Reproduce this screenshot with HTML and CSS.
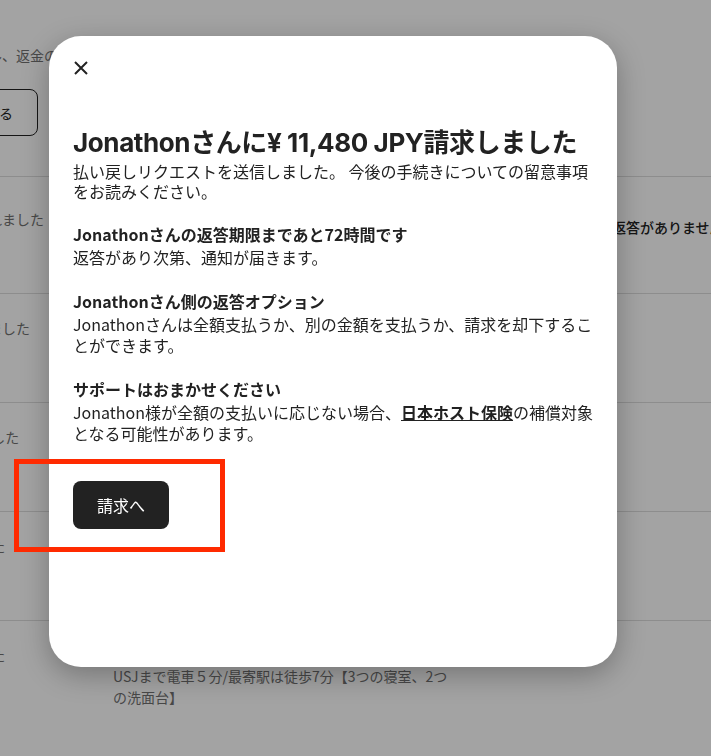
FILE: index.html
```html
<!DOCTYPE html>
<html lang="ja">

<head>
  <meta charset="UTF-8">
  <meta name="viewport" content="width=device-width, initial-scale=1.0">
  <title>請求</title>
  <link rel="stylesheet" href="styles.css">
</head>

<body>

  <!-- page behind the dialog -->
  <div class="page">
    <div class="intro">
      <p class="intro-text">予約キャンセル、返金のリクエストを管理できます。</p>
      <button class="outline-btn">ヘルプを見る</button>
    </div>

    <div class="row first">
      <div class="status">返金が承認されました</div>
      <div class="listing"></div>
      <div class="reply">返答がありません</div>
    </div>
    <div class="row">
      <div class="status">返金を送金しました</div>
      <div class="listing"></div>
    </div>
    <div class="row">
      <div class="status">支払い されました</div>
      <div class="listing"></div>
    </div>
    <div class="row">
      <div class="status">請求を撤回 した</div>
      <div class="listing"></div>
    </div>
    <div class="row">
      <div class="status">請求を撤回 した</div>
      <div class="listing">
        <div>大阪ベイエリアの一軒家</div>
        <div>USJまで電車５分/最寄駅は徒歩7分【3つの寝室、2つの洗面台】</div>
      </div>
    </div>
  </div>

  <div class="overlay"></div>

  <div class="modal">
    <button class="close-btn" aria-label="閉じる">
      <svg viewBox="0 0 16 16" width="16" height="16">
        <path d="M2 2 14 14M14 2 2 14" stroke="#222" stroke-width="2" fill="none" />
      </svg>
    </button>

    <h1 class="modal-title">Jonathonさんに¥ 11,480 JPY請求しました</h1>
    <p class="modal-sub">払い戻しリクエストを送信しました。 今後の手続きについての留意事項をお読みください。</p>

    <div class="section">
      <h2>Jonathonさんの返答期限まであと72時間です</h2>
      <p>返答があり次第、通知が届きます。</p>
    </div>

    <div class="section">
      <h2>Jonathonさん側の返答オプション</h2>
      <p>Jonathonさんは全額支払うか、別の金額を支払うか、請求を却下することができます。</p>
    </div>

    <div class="section">
      <h2>サポートはおまかせください</h2>
      <p>Jonathon様が全額の支払いに応じない場合、<a href="#">日本ホスト保険</a>の補償対象となる可能性があります。</p>
    </div>

    <button class="primary-btn">請求へ</button>
  </div>

  <div class="highlight"></div>

</body>

</html>
```

FILE: styles.css
```css
html,
body {
  margin: 0;
  height: 100%;
  overflow: hidden;
  background-color: white;
  font-family: "Noto Sans CJK JP", sans-serif;
  color: #222222;
}

/* page */
.page {
  margin-left: -96px;
  width: 900px;
  font-size: 14px;
  line-height: 21px;
  color: #717171;
}

.intro {
  padding-top: 45px;
  padding-bottom: 40px;
}

.intro-text {
  margin: 0;
  white-space: nowrap;
}

.outline-btn {
  margin-top: 23px;
  height: 47px;
  padding: 0 24px;
  background-color: white;
  border: 1px solid #222222;
  border-radius: 8px;
  font-family: inherit;
  font-size: 14px;
  color: #222222;
}

.row {
  display: flex;
  box-sizing: border-box;
  height: 109px;
  padding-top: 24px;
  border-top: 1px solid #dddddd;
}

.row.first {
  height: 117px;
  padding-top: 32px;
}

.status {
  width: 209px;
  white-space: nowrap;
}

.listing {
  width: 340px;
}

.reply {
  margin-left: 159px;
  padding-top: 8px;
  font-weight: 500;
  color: #222222;
  white-space: nowrap;
}

.overlay {
  position: fixed;
  inset: 0;
  background-color: rgba(0, 0, 0, 0.36);
}

/* dialog */
.modal {
  position: absolute;
  left: 49px;
  top: 36px;
  width: 568px;
  height: 631px;
  box-sizing: border-box;
  padding: 24px 16px 24px 24px;
  background-color: white;
  border-radius: 32px;
  box-shadow: 0 8px 28px rgba(0, 0, 0, 0.28);
}

.close-btn {
  display: flex;
  padding: 0;
  width: 16px;
  height: 16px;
  border: none;
  background: none;
}

.modal-title {
  margin: 52px 0 0 0;
  font-family: Inter, "Noto Sans CJK JP", sans-serif;
  font-size: 26px;
  line-height: 30px;
  font-weight: 700;
  letter-spacing: -0.4px;
}

.modal-sub {
  margin: 3px 8px 3px 0;
  font-size: 16px;
  line-height: 20px;
}

.section {
  margin-top: 23px;
}

.section h2 {
  margin: 0 0 3px 0;
  font-size: 16px;
  line-height: 20px;
  font-weight: 700;
}

.section p {
  margin: 0;
  font-size: 16px;
  line-height: 21px;
}

.section a {
  color: #222222;
  font-weight: 700;
  text-decoration: underline;
}

.primary-btn {
  margin-top: 37px;
  width: 96px;
  height: 48px;
  background-color: #222222;
  border: none;
  border-radius: 8px;
  font-family: inherit;
  font-size: 16px;
  color: white;
}

/* annotation */
.highlight {
  position: absolute;
  left: 14px;
  top: 459px;
  width: 201px;
  height: 83px;
  border: 5px solid #ff2a00;
}
```
